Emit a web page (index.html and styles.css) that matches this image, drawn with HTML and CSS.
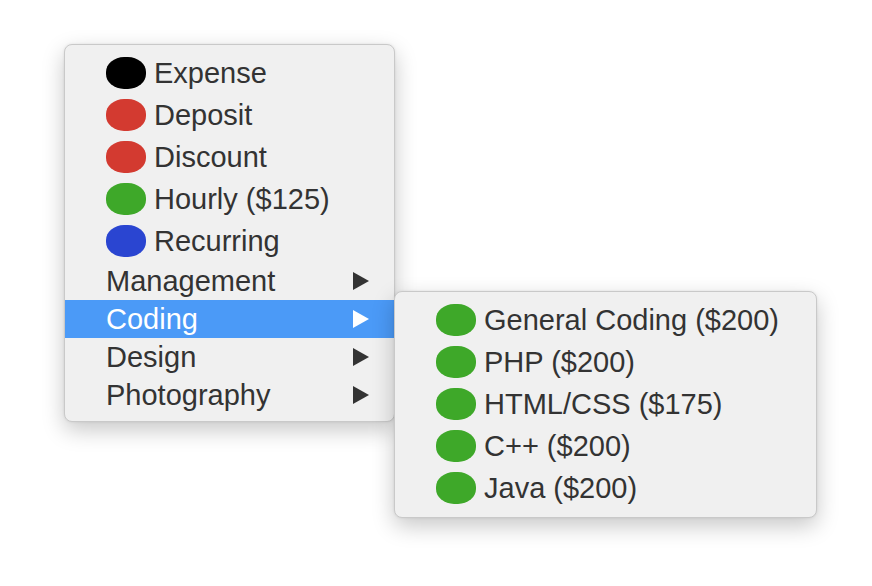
FILE: index.html
```html
<!DOCTYPE html>
<html>
<head>
<meta charset="utf-8">
<link rel="stylesheet" href="styles.css">
</head>
<body>
<div class="canvas">
  <ul class="menu main-menu">
    <li class="item"><span class="dot black"></span>Expense</li>
    <li class="item"><span class="dot red"></span>Deposit</li>
    <li class="item"><span class="dot red"></span>Discount</li>
    <li class="item"><span class="dot green"></span>Hourly ($125)</li>
    <li class="item"><span class="dot blue"></span>Recurring</li>
    <li class="item sub"><span class="label">Management</span><span class="arrow"></span></li>
    <li class="item sub active"><span class="label">Coding</span><span class="arrow"></span></li>
    <li class="item sub"><span class="label">Design</span><span class="arrow"></span></li>
    <li class="item sub"><span class="label">Photography</span><span class="arrow"></span></li>
  </ul>
  <ul class="menu sub-menu">
    <li class="item"><span class="dot green"></span>General Coding ($200)</li>
    <li class="item"><span class="dot green"></span>PHP ($200)</li>
    <li class="item"><span class="dot green"></span>HTML/CSS ($175)</li>
    <li class="item"><span class="dot green"></span>C++ ($200)</li>
    <li class="item"><span class="dot green"></span>Java ($200)</li>
  </ul>
</div>
</body>
</html>
```
FILE: styles.css
```css
html, body {
  margin: 0;
  padding: 0;
  background: #ffffff;
}
body {
  font-family: "Liberation Sans", Arial, sans-serif;
  font-size: 29px;
  color: #333333;
}
.canvas {
  position: relative;
  width: 872px;
  height: 586px;
  overflow: hidden;
}
.menu {
  position: absolute;
  margin: 0;
  padding: 7px 0 8px 0;
  list-style: none;
  background: #f0f0f0;
  border: 1px solid #c9c9c9;
  border-radius: 8px;
  box-shadow: 0 8px 22px rgba(0, 0, 0, 0.22), 0 0 3px rgba(0, 0, 0, 0.08);
  box-sizing: border-box;
}
.main-menu {
  left: 64px;
  top: 44px;
  width: 331px;
  height: 378px;
}
.sub-menu {
  left: 394px;
  top: 291px;
  width: 423px;
  height: 227px;
}
.item {
  display: flex;
  align-items: center;
  height: 42px;
  padding-left: 41px;
  padding-right: 24px;
  white-space: nowrap;
}
.item.sub {
  height: 38px;
  justify-content: space-between;
}
.item.active {
  background: #4b9af7;
  color: #ffffff;
}
.dot {
  width: 40px;
  height: 32px;
  border-radius: 18px / 15px;
  margin-right: 8px;
  flex: none;
}
.dot.black { background: #000000; }
.dot.red { background: #d33a30; }
.dot.green { background: #3ea829; }
.dot.blue { background: #2a45d1; }
.arrow {
  width: 0;
  height: 0;
  border-top: 9px solid transparent;
  border-bottom: 9px solid transparent;
  border-left: 16px solid #333333;
  margin-right: 1px;
}
.item.active .arrow {
  border-left-color: #ffffff;
}
```
